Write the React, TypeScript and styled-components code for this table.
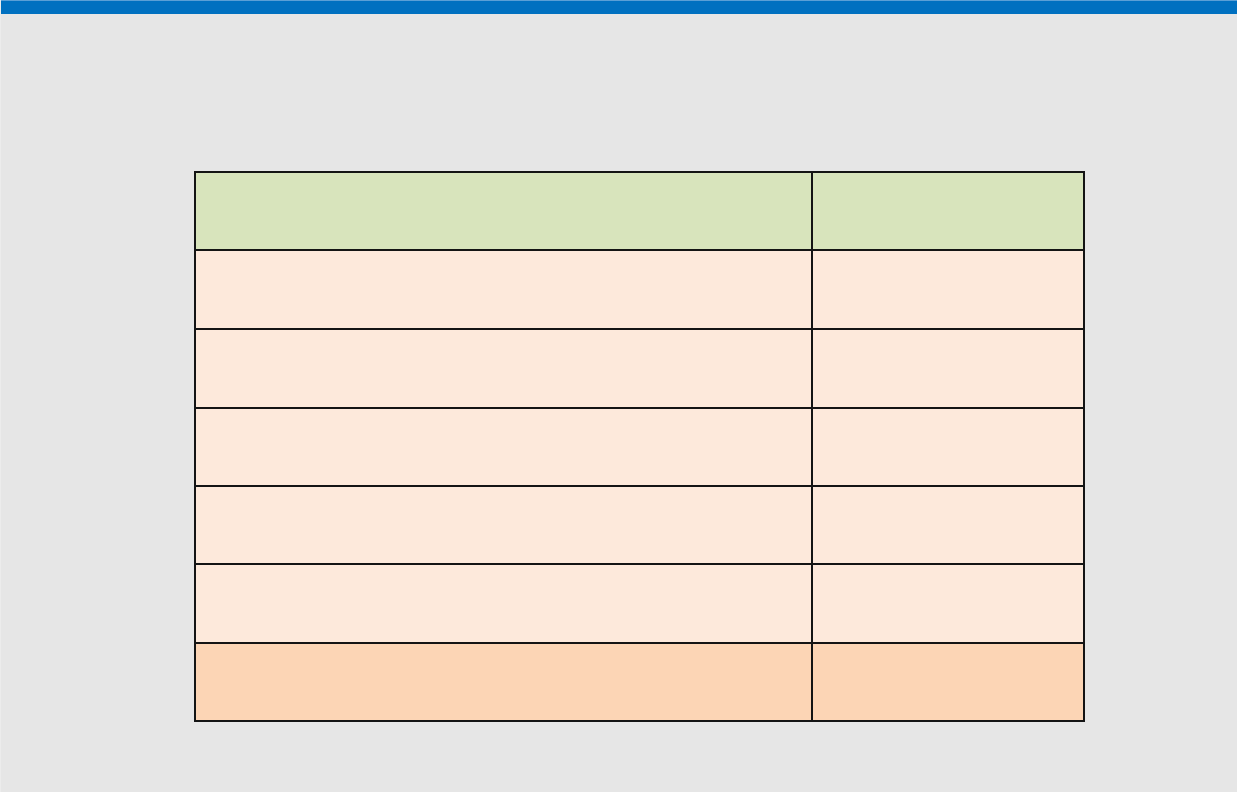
import React from "react";
import styled, { createGlobalStyle } from "styled-components";

const GlobalStyle = createGlobalStyle`
  html, body {
    margin: 0;
    padding: 0;
    background: #e6e6e6;
    font-family: "Liberation Sans", Arial, sans-serif;
  }
`;

const Page = styled.div`
  min-height: 792px;
  background: #e6e6e6;
  border-left: 1px solid #ececec;
  box-sizing: border-box;
`;

const TopBar = styled.div`
  height: 13px;
  background: #0070c0;
  border-top: 1px solid #5a9fd6;
`;

const Main = styled.main`
  padding: 157px 0 0 193px;
`;

const Grid = styled.div`
  display: grid;
  grid-template-columns: 617px 272px;
  grid-template-rows: 78px 79px 79px 78px 78px 79px 78px;
  width: max-content;
  border-top: 2px solid #141414;
  border-left: 2px solid #141414;
`;

type Tone = "head" | "body" | "total";

const toneColor: Record<Tone, string> = {
  head: "#d8e4bc",
  body: "#fde9db",
  total: "#fcd5b5",
};

const Cell = styled.div<{ $tone: Tone }>`
  background: ${(p) => toneColor[p.$tone]};
  border-right: 2px solid #141414;
  border-bottom: 2px solid #141414;
  font-size: 14px;
  color: #222;
`;

const rows: Tone[] = ["head", "body", "body", "body", "body", "body", "total"];

export default function App() {
  return (
    <>
      <GlobalStyle />
      <Page>
        <TopBar />
        <Main>
          <Grid>
            {rows.map((tone, i) => (
              <React.Fragment key={i}>
                <Cell $tone={tone} />
                <Cell $tone={tone} />
              </React.Fragment>
            ))}
          </Grid>
        </Main>
      </Page>
    </>
  );
}
